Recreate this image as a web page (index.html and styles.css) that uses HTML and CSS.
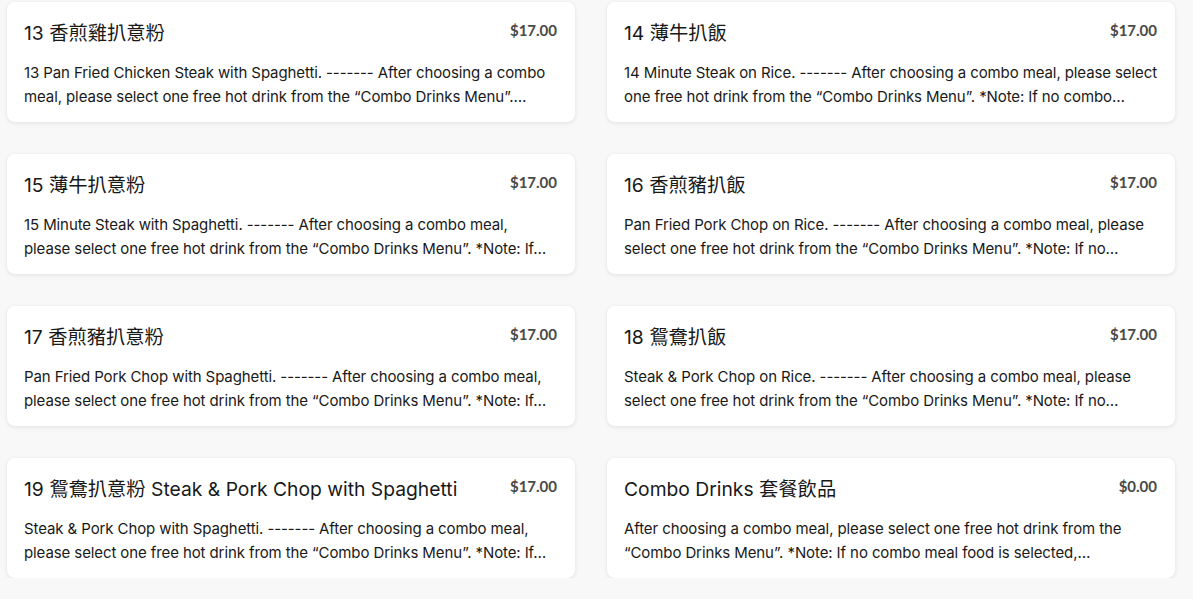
FILE: index.html
```html
<!DOCTYPE html>
<html lang="zh-Hant">
<head>
  <meta charset="UTF-8" />
  <meta name="viewport" content="width=device-width, initial-scale=1.0"/>
  <title>Menu</title>
  <link rel="stylesheet" href="styles.css">
</head>
<body>

  <div class="menu">

    <div class="card">
      <div class="card-head">
        <h3>13 香煎雞扒意粉</h3>
        <span class="price">$17.00</span>
      </div>
      <p>13 Pan Fried Chicken Steak with Spaghetti. ------- After choosing a combo meal, please select one free hot drink from the “Combo Drinks Menu”.…</p>
    </div>

    <div class="card">
      <div class="card-head">
        <h3>14 薄牛扒飯</h3>
        <span class="price">$17.00</span>
      </div>
      <p>14 Minute Steak on Rice. ------- After choosing a combo meal, please select one free hot drink from the “Combo Drinks Menu”. *Note: If no combo…</p>
    </div>

    <div class="card">
      <div class="card-head">
        <h3>15 薄牛扒意粉</h3>
        <span class="price">$17.00</span>
      </div>
      <p>15 Minute Steak with Spaghetti. ------- After choosing a combo meal, please select one free hot drink from the “Combo Drinks Menu”. *Note: If…</p>
    </div>

    <div class="card">
      <div class="card-head">
        <h3>16 香煎豬扒飯</h3>
        <span class="price">$17.00</span>
      </div>
      <p>Pan Fried Pork Chop on Rice. ------- After choosing a combo meal, please select one free hot drink from the “Combo Drinks Menu”. *Note: If no…</p>
    </div>

    <div class="card">
      <div class="card-head">
        <h3>17 香煎豬扒意粉</h3>
        <span class="price">$17.00</span>
      </div>
      <p>Pan Fried Pork Chop with Spaghetti. ------- After choosing a combo meal, please select one free hot drink from the “Combo Drinks Menu”. *Note: If…</p>
    </div>

    <div class="card">
      <div class="card-head">
        <h3>18 鴛鴦扒飯</h3>
        <span class="price">$17.00</span>
      </div>
      <p>Steak &amp; Pork Chop on Rice. ------- After choosing a combo meal, please select one free hot drink from the “Combo Drinks Menu”. *Note: If no…</p>
    </div>

    <div class="card">
      <div class="card-head">
        <h3>19 鴛鴦扒意粉 Steak &amp; Pork Chop with Spaghetti</h3>
        <span class="price">$17.00</span>
      </div>
      <p>Steak &amp; Pork Chop with Spaghetti. ------- After choosing a combo meal, please select one free hot drink from the “Combo Drinks Menu”. *Note: If…</p>
    </div>

    <div class="card">
      <div class="card-head">
        <h3>Combo Drinks 套餐飲品</h3>
        <span class="price">$0.00</span>
      </div>
      <p>After choosing a combo meal, please select one free hot drink from the “Combo Drinks Menu”. *Note: If no combo meal food is selected,…</p>
    </div>

  </div>

</body>
</html>
```

FILE: styles.css
```css
body {
  margin: 0;
  font-family: 'Inter', 'Noto Sans CJK TC', sans-serif;
  background-color: #f8f8f8;
  color: #191919;
}

.menu {
  display: grid;
  grid-template-columns: repeat(2, 568px);
  gap: 32px;
  padding: 2px 0 0 7px;
}

.card {
  background-color: #fff;
  border-radius: 8px;
  box-shadow: 0 1px 4px rgba(0,0,0,0.1);
  height: 120px;
  box-sizing: border-box;
  padding: 18px 17px 0 17px;
}

.card-head {
  display: flex;
  justify-content: space-between;
  align-items: flex-start;
  gap: 16px;
}

.card-head h3 {
  margin: 0;
  font-size: 19.3px;
  font-weight: 400;
  line-height: 26px;
}

.price {
  font-family: 'Lato', sans-serif;
  font-size: 15px;
  font-weight: 700;
  color: #494949;
  line-height: 20px;
  padding-right: 1px;
}

/* descriptions come pre-shortened; clamp is only a guard */
.card p {
  margin: 15px 0 0;
  font-size: 15px;
  letter-spacing: -0.1px;
  line-height: 24px;
  display: -webkit-box;
  -webkit-line-clamp: 2;
  -webkit-box-orient: vertical;
  overflow: hidden;
}
```
